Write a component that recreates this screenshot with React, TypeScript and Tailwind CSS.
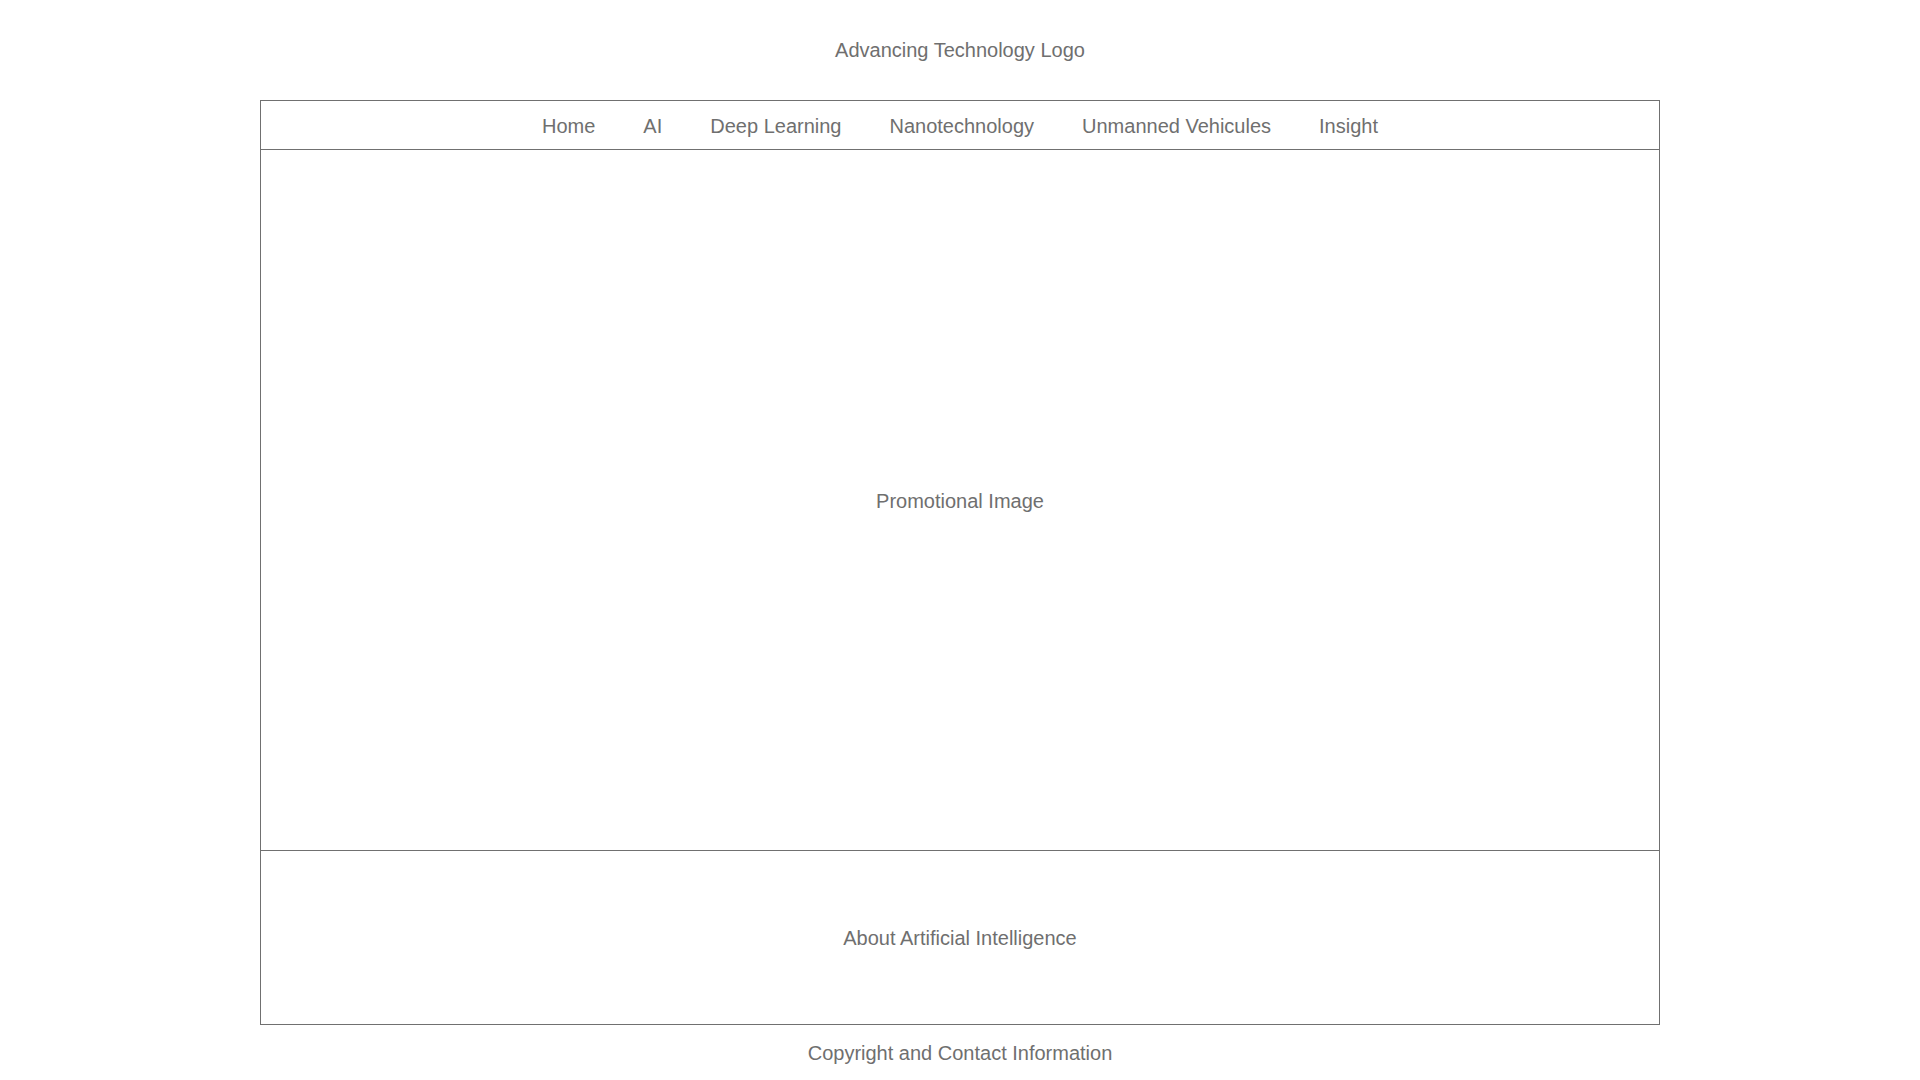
const navItems = ["Home", "AI", "Deep Learning", "Nanotechnology", "Unmanned Vehicules", "Insight"];

export default function App() {
  return (
    <div
      className="min-h-screen bg-white text-[20px] text-[#6f6f6f]"
      style={{ fontFamily: '"Liberation Sans", Arial, sans-serif' }}
    >
      <header className="flex h-[100px] items-center justify-center">
        <span>Advancing Technology Logo</span>
      </header>

      <div className="mx-auto w-[1400px] border border-[#707070]">
        <nav className="flex h-[49px] items-center justify-center gap-12 border-b border-[#707070] pt-[1px]">
          {navItems.map((item) => (
            <a key={item} href="#" className="leading-none">
              {item}
            </a>
          ))}
        </nav>

        <section className="flex h-[701px] items-center justify-center border-b border-[#707070] pt-[1px]">
          <span>Promotional Image</span>
        </section>

        <section className="flex h-[173px] items-center justify-center">
          <span>About Artificial Intelligence</span>
        </section>
      </div>

      <footer className="flex h-[56px] items-center justify-center">
        <span>Copyright and Contact Information</span>
      </footer>
    </div>
  );
}
